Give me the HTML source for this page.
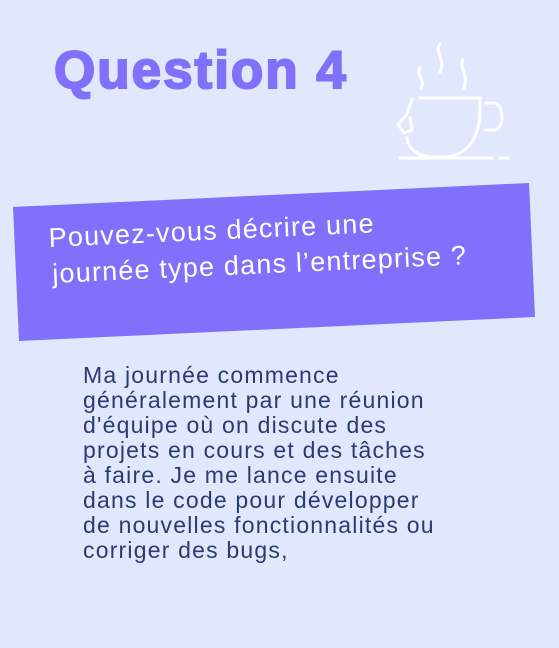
<!DOCTYPE html>
<html><head><meta charset="utf-8"><style>
html,body{margin:0;padding:0}
body{width:559px;height:648px;background:#e1e7fd;position:relative;overflow:hidden;font-family:"Liberation Sans",sans-serif}
.title{position:absolute;left:54px;top:40px;font-size:53px;font-weight:bold;color:#8070fa;letter-spacing:2px;line-height:62px;-webkit-text-stroke:2px #8070fa}
.body{position:absolute;left:83px;top:363px;font-size:23px;letter-spacing:1.2px;line-height:25px;color:#2b3b72;width:460px;white-space:nowrap}
</style></head><body>
<div class="title">Question 4</div>
<svg width="559" height="648" style="position:absolute;left:0;top:0">
<g fill="none" stroke="#fff" stroke-width="3" stroke-linecap="round" stroke-linejoin="round">
<path d="M420 68 C415 74,426 80,421 88"/>
<path d="M440 44 C434 52,446 60,440 72"/>
<path d="M463 60 C458 66,469 74,464 88"/>
<path d="M420 98 H480 V110 C480 140,465 156,445 157 H430 C415 156,408 146,407 138"/>
<path d="M486 103 H494 C504 103,505 130,494 130 H486"/>
<path d="M412 99 L406 116 L398 124 L404 133 L412 130 L410 118"/>
<path d="M400 158 H492"/><path d="M500 158 H508"/>
</g>
<polygon points="13,207 529,183 535,317 19,341" fill="#8070fb"/>
<g transform="rotate(-2.6 50 245)" font-family="Liberation Sans,sans-serif" font-size="27" letter-spacing="1.2" fill="#fff">
<text x="49" y="247">Pouvez-vous décrire une</text>
<text x="51" y="283">journée type dans l’entreprise ?</text>
</g>
</svg>
<div class="body">Ma journée commence<br>généralement par une réunion<br>d'équipe où on discute des<br>projets en cours et des tâches<br>à faire. Je me lance ensuite<br>dans le code pour développer<br>de nouvelles fonctionnalités ou<br>corriger des bugs,</div>
</body></html>
